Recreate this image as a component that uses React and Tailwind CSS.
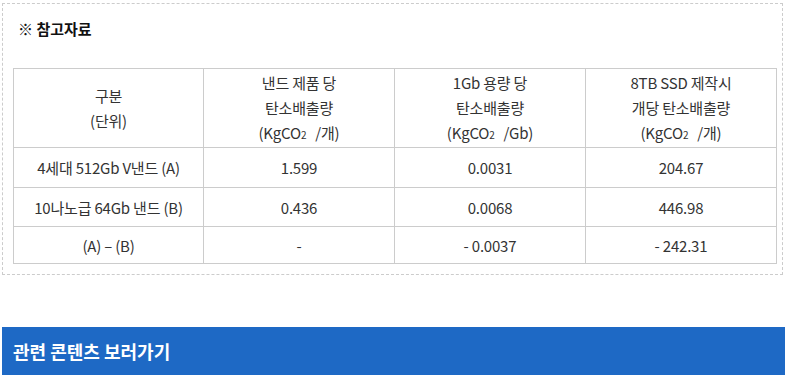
const rows = [
  ["4세대 512Gb V낸드 (A)", "1.599", "0.0031", "204.67"],
  ["10나노급 64Gb 낸드 (B)", "0.436", "0.0068", "446.98"],
  ["(A) – (B)", "-", "- 0.0037", "- 242.31"],
];

function Unit({ per }) {
  return (
    <>
      (KgCO<span className="text-[10px]">2</span>
      <span className="inline-block w-[9px]" />/{per})
    </>
  );
}

export default function App() {
  const cell = "border border-[#cccccc] text-center align-middle";
  return (
    <div
      className="w-[785px] h-[375px] bg-white overflow-hidden text-[#333333]"
      style={{ fontFamily: '"Noto Sans CJK KR", "Noto Sans", sans-serif' }}
    >
      <div className="mx-[2px] mt-[3px] h-[272px] border border-dashed border-[#cccccc] px-[10px]">
        <h3 className="mt-[15px] pl-[5px] text-[15px] font-bold leading-[20px] text-[#111111]">
          ※ 참고자료
        </h3>
        <table className="mt-[29px] w-[764px] border-collapse text-[15px] leading-[25px] tracking-[-0.2px] table-fixed">
          <colgroup>
            <col className="w-[190px]" />
            <col className="w-[191px]" />
            <col className="w-[191px]" />
            <col className="w-[191px]" />
          </colgroup>
          <thead>
            <tr className="h-[79px]">
              <th className={cell + " font-normal"}>
                구분
                <br />
                (단위)
              </th>
              <th className={cell + " font-normal"}>
                낸드 제품 당
                <br />
                탄소배출량
                <br />
                <Unit per="개" />
              </th>
              <th className={cell + " font-normal"}>
                1Gb 용량 당
                <br />
                탄소배출량
                <br />
                <Unit per="Gb" />
              </th>
              <th className={cell + " font-normal"}>
                8TB SSD 제작시
                <br />
                개당 탄소배출량
                <br />
                <Unit per="개" />
              </th>
            </tr>
          </thead>
          <tbody>
            {rows.map((r, i) => (
              <tr key={i} className={i === 2 ? "h-[37px]" : i === 1 ? "h-[39px]" : "h-[40px]"}>
                {r.map((c, j) => (
                  <td key={j} className={cell}>
                    {c}
                  </td>
                ))}
              </tr>
            ))}
          </tbody>
        </table>
      </div>
      <div className="mt-[52px] ml-[2px] h-[48px] bg-[#1e69c5] flex items-center pl-[11px]">
        <span className="text-white font-bold text-[18px]">관련 콘텐츠 보러가기</span>
      </div>
    </div>
  );
}
